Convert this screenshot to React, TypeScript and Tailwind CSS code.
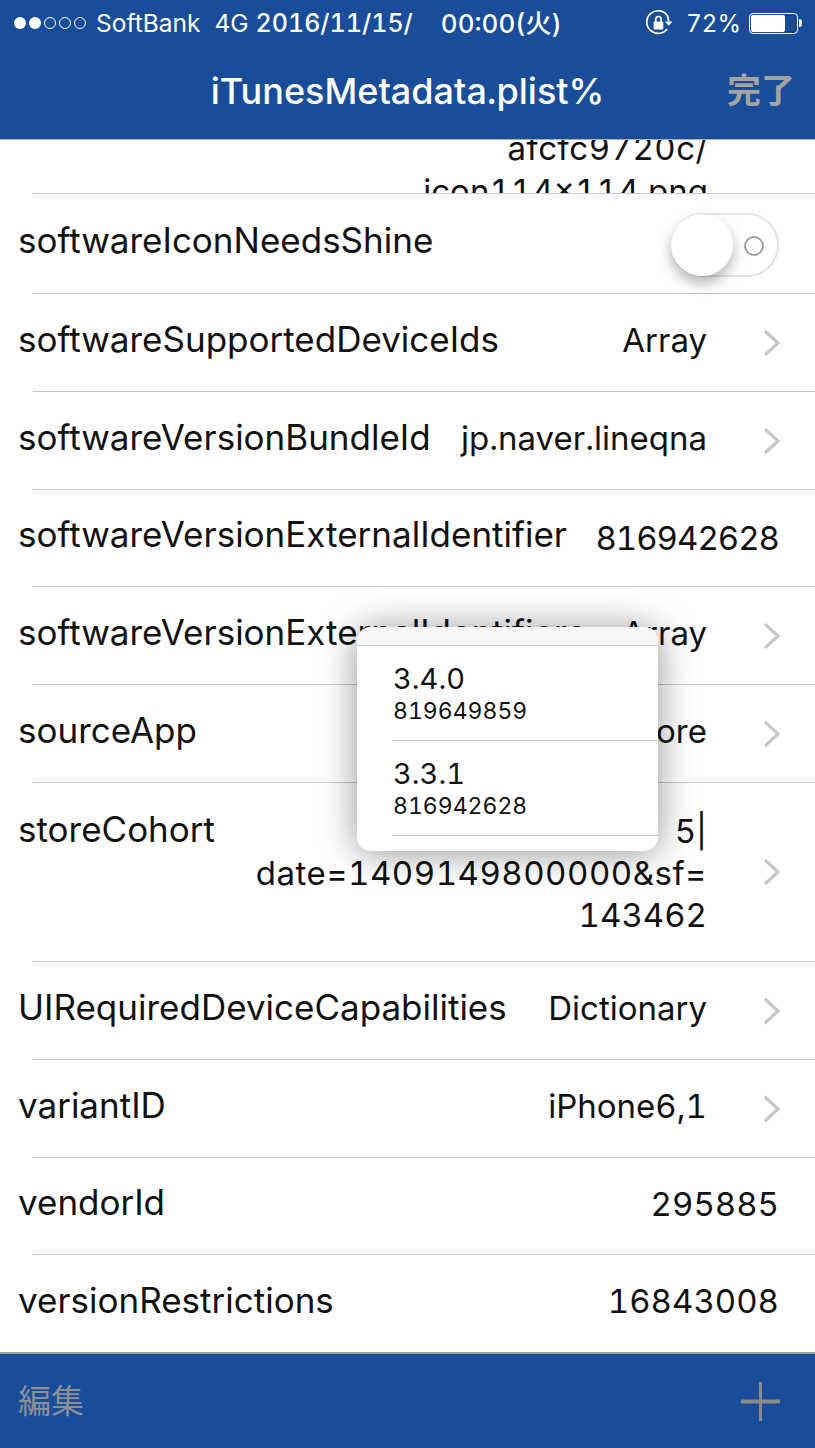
const FONT = "font-['Inter','Liberation_Sans','Noto_Sans_CJK_JP',sans-serif]"

function Chevron() {
  return (
    <svg width="18" height="28" viewBox="0 0 18 28" fill="none" className="shrink-0">
      <path d="M2 2l13 12L2 26" stroke="#c7c7cc" strokeWidth="3.2" />
    </svg>
  )
}

function RotationLock() {
  return (
    <svg width="28" height="28" viewBox="0 0 26 26" fill="none">
      <path d="M20.5 18.500A10.500 10.500 0 1 1 21 6.500l1 5" stroke="#fff" strokeWidth="1.6" />
      <path d="M18.500 11.500h7l-3.500 4z" fill="#fff" />
      <rect x="8" y="11.500" width="9" height="7.500" rx="1" fill="#fff" />
      <path d="M10 12V9.500a2.500 2.500 0 0 1 5 0V12" stroke="#fff" strokeWidth="1.500" />
    </svg>
  )
}

function Battery() {
  return (
    <div className="flex items-center">
      <div className="flex h-[21px] w-[49px] items-stretch rounded-[4px] border border-white p-px">
        <div className="w-[34px] rounded-[2px] bg-white" />
        <div className="flex-1 rounded-r-[2px] border border-l-0 border-[#0f3f8f]" />
      </div>
      <div className="ml-px h-[8px] w-[3px] rounded-r-full bg-white" />
    </div>
  )
}

function StatusBar() {
  return (
    <div className="flex h-[46px] items-center justify-between pl-[14px] pr-[13px] text-[24.5px] text-white">
      <div className="flex items-center">
        <div className="flex items-center gap-[3px]">
          <span className="h-[12px] w-[12px] rounded-full bg-white" />
          <span className="h-[12px] w-[12px] rounded-full bg-white" />
          <span className="h-[12px] w-[12px] rounded-full border border-white" />
          <span className="h-[12px] w-[12px] rounded-full border border-white" />
          <span className="h-[12px] w-[12px] rounded-full border border-white" />
        </div>
        <span className="ml-[10px]">SoftBank</span>
        <span className="ml-[14px]">4G</span>
        <span className="ml-[7px] text-[25px] font-medium tabular-nums">2016/11/15/</span>
        <span className="ml-[28px] text-[26px] font-medium tabular-nums">00:00(火)</span>
      </div>
      <div className="flex items-center">
        <RotationLock />
        <span className="ml-[13px] mr-[8px] text-[24px]">72%</span>
        <Battery />
      </div>
    </div>
  )
}

function Separator() {
  return <div className="ml-[33px] h-px shrink-0 bg-[#c8c7cc]" />
}

type RowProps = {
  label: string
  value?: string
  chevron?: boolean
  short?: boolean
  tight?: boolean
}

function Row({ label, value, chevron, short, tight }: RowProps) {
  return (
    <>
      <div className={`flex shrink-0 items-center pl-[18px] ${short ? 'h-[96px]' : 'h-[97px]'} ${chevron ? 'pr-[34px]' : 'pr-[36px]'}`}>
        <span className="mb-[7px] whitespace-nowrap">{label}</span>
        <span
          className={`ml-auto whitespace-nowrap text-[33px] ${chevron ? 'mb-[5px] mr-[56px]' : 'mb-[4px]'} ${tight ? 'mt-[4px] tracking-[-1px]' : ''}`}
        >
          {value}
        </span>
        {chevron && <Chevron />}
      </div>
      <Separator />
    </>
  )
}

export default function App() {
  return (
    <div className={`${FONT} relative flex h-[1448px] w-[815px] flex-col overflow-hidden bg-white text-[35px] leading-[41px] text-[#111] tabular-nums`}>
      <header className="h-[139px] shrink-0 bg-[#194d99]">
        <StatusBar />
        <div className="relative flex h-[91px] items-center justify-center">
          <span className="text-[36px] font-medium text-white">iTunesMetadata.plist%</span>
          <span className="absolute right-[20px] top-[24px] text-[34px] font-bold text-[#a3a3a3]">完了</span>
        </div>
      </header>
      <div className="h-px shrink-0 bg-[#a9aeb8]" />

      <main className="flex min-h-0 flex-1 flex-col overflow-hidden">
        <div className="h-[53px] shrink-0 overflow-hidden pr-[107px] text-right text-[33px]">
          <div className="-mt-[12px] tracking-[0.5px]">afcfc9720c/</div>
          <div className="mt-[2px]">icon114x114.png</div>
        </div>
        <Separator />

        <div className="flex h-[99px] shrink-0 items-center pl-[18px] pr-[36px]">
          <span className="mb-[6px]">softwareIconNeedsShine</span>
          <div className="relative ml-auto mt-[2px] h-[64px] w-[108px] rounded-full border-2 border-[#e5e5e5]">
            <div className="absolute -left-[2px] -top-[1px] h-[62px] w-[62px] rounded-full bg-white shadow-[0_7px_14px_rgba(0,0,0,0.3)]" />
            <div className="absolute right-[13px] top-[21px] h-[20px] w-[20px] rounded-full border-2 border-[#a0a0a0]" />
          </div>
        </div>
        <Separator />

        <Row label="softwareSupportedDeviceIds" value="Array" chevron />
        <Row label="softwareVersionBundleId" value="jp.naver.lineqna" chevron />
        <Row label="softwareVersionExternalIdentifier" value="816942628" short tight />
        <Row label="softwareVersionExternalIdentifiers" value="Array" chevron />
        <Row label="sourceApp" value="com.apple.AppStore" chevron />

        <div className="flex h-[178px] shrink-0 items-center pl-[18px] pr-[34px]">
          <span className="mb-[86px]">storeCohort</span>
          <div className="ml-auto mr-[56px] mt-[1px] text-right text-[33px] leading-[42px]">
            <div>5|</div>
            <div className="tracking-[0.5px]">date=1409149800000&amp;sf=</div>
            <div>143462</div>
          </div>
          <Chevron />
        </div>
        <Separator />

        <Row label="UIRequiredDeviceCapabilities" value="Dictionary" chevron />
        <Row label="variantID" value="iPhone6,1" chevron />
        <Row label="vendorId" value="295885" short />
        <Row label="versionRestrictions" value="16843008" />
      </main>

      <footer className="flex h-[96px] shrink-0 items-center justify-between border-t-2 border-[#9a9ea8] bg-[#194d99] pl-[18px] pr-[35px] text-[#8a8f98]">
        <span className="text-[33px]">編集</span>
        <svg width="39" height="39" viewBox="0 0 39 39" fill="none">
          <path d="M0 19.500h39" stroke="#8a8a8a" strokeWidth="4" />
          <path d="M19.500 0v39" stroke="#8a8a8a" strokeWidth="3" />
        </svg>
      </footer>

      <div className="absolute left-[357px] top-[627px] h-[224px] w-[301px] overflow-hidden rounded-[14px] bg-white shadow-[0_2px_36px_rgba(0,0,0,0.42)]">
        <div className="h-[19px] border-b border-[#c8c7cc] bg-[#f7f7f7]" />
        <div className="h-[94px] pl-[36px] pt-[13px]">
          <div className="text-[29px] leading-[40px]">3.4.0</div>
          <div className="text-[23px] leading-[25px]">819649859</div>
        </div>
        <div className="ml-[35px] h-px bg-[#c8c7cc]" />
        <div className="h-[94px] pl-[36px] pt-[13px]">
          <div className="text-[29px] leading-[40px]">3.3.1</div>
          <div className="text-[23px] leading-[25px]">816942628</div>
        </div>
        <div className="ml-[35px] h-px bg-[#c8c7cc]" />
      </div>
    </div>
  )
}
